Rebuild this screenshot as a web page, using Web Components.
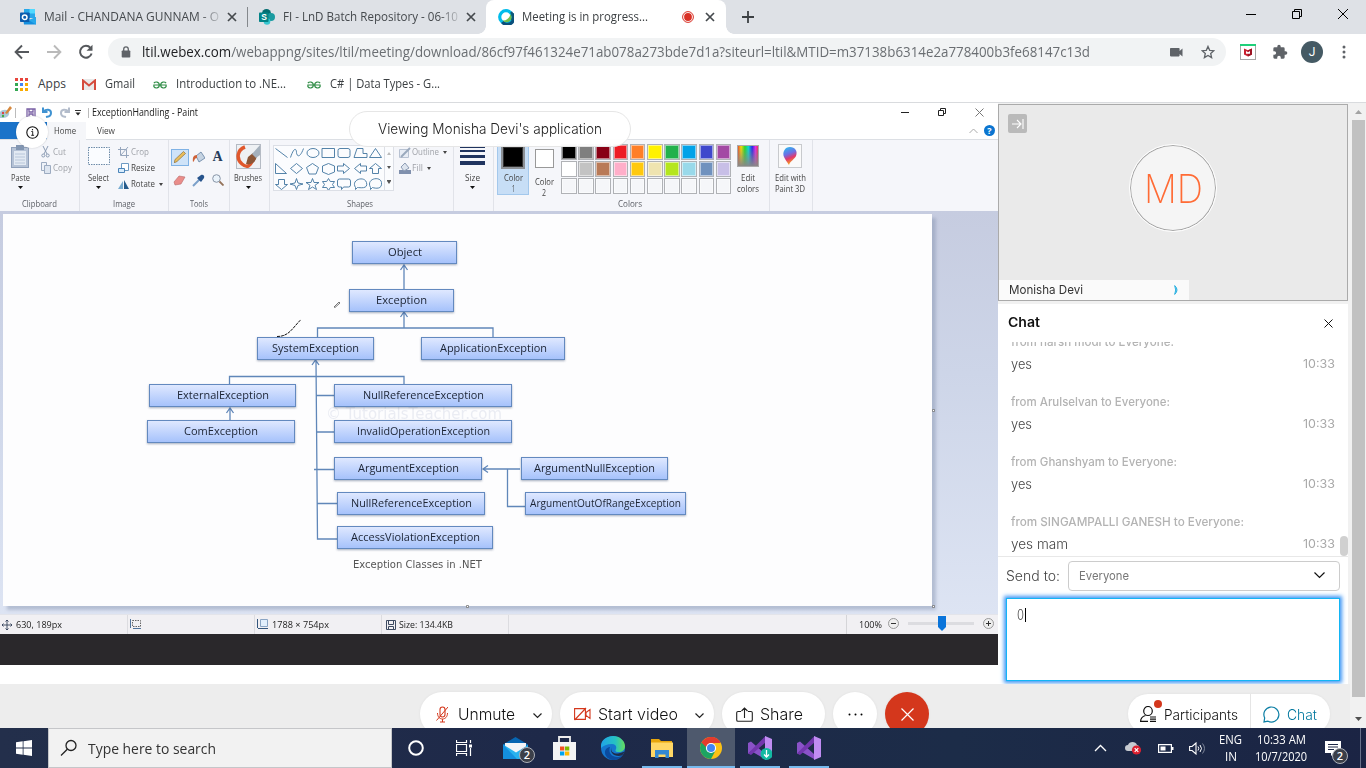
<!DOCTYPE html>
<html lang="en">
<head>
<meta charset="utf-8">
<title>Meeting is in progress...</title>
<style>
html,body{margin:0;height:100%;overflow:hidden;background:#fff}
body{font-family:"Open Sans","Noto Sans",sans-serif;font-size:12px}
</style>
</head>
<body>
<meeting-desktop></meeting-desktop>
<script>
/* Shared helper: registers an element with its own styles and markup. */
function define(name, css, html) {
  const tpl = document.createElement('template');
  tpl.innerHTML = '<style>*{box-sizing:border-box}:host{display:block;box-sizing:border-box}svg{display:block;flex:none}' + css + '</style>' + (typeof html === 'string' ? html : '');
  customElements.define(name, class extends HTMLElement {
    connectedCallback() {
      if (this.shadowRoot) return;
      const root = this.attachShadow({ mode: 'open' });
      if (typeof html === 'function') {
        root.innerHTML = tpl.innerHTML + html(this);
      } else {
        root.appendChild(document.importNode(tpl.content, true));
      }
    }
  });
}

/* One line of text, condensed or widened to the width in its "w" attribute. */
customElements.define('ui-text', class extends HTMLElement {
  connectedCallback() {
    if (this.shadowRoot) return;
    const root = this.attachShadow({ mode: 'open' });
    root.innerHTML = '<style>:host{display:block;white-space:nowrap;flex:none;text-align:left}span{display:inline-block;transform-origin:0 50%}</style><span><slot></slot></span>';
    const w = parseFloat(this.getAttribute('w'));
    if (!w) return;
    const span = root.querySelector('span');
    this.style.width = w + 'px';
    const natural = span.offsetWidth ? span.getBoundingClientRect().width : 0;
    if (natural) span.style.transform = 'scaleX(' + (w / natural) + ')';
  }
});

/* ---------- browser ---------- */
define('browser-tab', `
:host{height:34px;display:flex;align-items:center;padding-left:12px;position:relative;color:#45494d;font-size:12px;line-height:34px}
:host([active]){background:#fff;border-radius:8px 8px 0 0;color:#3c4043}
:host([active])::before,:host([active])::after{content:"";position:absolute;bottom:0;width:8px;height:8px}
:host([active])::before{left:-8px;background:radial-gradient(circle at 0 0,transparent 7.5px,#fff 8px)}
:host([active])::after{right:-8px;background:radial-gradient(circle at 100% 0,transparent 7.5px,#fff 8px)}
.t{margin-left:8px;flex:1;overflow:hidden}
:host([fade]) .t{-webkit-mask-image:linear-gradient(90deg,#000 89%,rgba(0,0,0,.15) 100%);mask-image:linear-gradient(90deg,#000 89%,rgba(0,0,0,.15) 100%)}
.x{margin:0 10px 0 7px}:host([active]) .x{margin:0 11px 0 11px}`,
`<slot name="icon"></slot><div class="t"><slot></slot></div><slot name="status"></slot>
<svg class="x" width="10" height="10" viewBox="0 0 10 10"><path d="M1 1l8 8M9 1l-8 8" stroke="#45494d" stroke-width="1.7"/></svg>`);

define('tab-strip', `
:host{display:flex;height:34px;background:#dee1e6;align-items:stretch}
.sep{width:1px;height:20px;background:#84888c;margin:7px 0 0 0}
.plus{margin:11px 0 0 16px}.win{display:flex;margin-left:auto;padding:9px 18px 0 0;gap:36px}`,
`<browser-tab fade style="width:247px;padding-left:20px">
<svg slot="icon" width="16" height="16" viewBox="0 0 16 16"><path d="M4 0h11v9H4z" fill="#28a8ea"/><path d="M9.500 0H15v4.500H9.500z" fill="#50d9ff"/><path d="M4 4h5.500v5H4z" fill="#0364b8"/><path d="M3 8.500l6.500 3.500L16 8v7.500H4z" fill="#1490df"/><path d="M16 8v7.500L8.500 11z" fill="#28a8ea"/><rect y="3.500" width="9.500" height="9.500" rx=".8" fill="#0b5cad"/><circle cx="4.700" cy="8.200" r="2.300" fill="none" stroke="#fff" stroke-width="1.500"/></svg>
<ui-text w="175">Mail - CHANDANA GUNNAM - O</ui-text></browser-tab>
<div class="sep"></div>
<browser-tab fade style="width:238px;padding-left:11px">
<svg slot="icon" width="16" height="16" viewBox="0 0 16 16"><circle cx="7.500" cy="4.500" r="4.500" fill="#036c70"/><circle cx="12" cy="8" r="4" fill="#1a9ba1"/><circle cx="8" cy="12.500" r="3.300" fill="#37c6d0"/><rect y="3.500" width="9.500" height="9.500" rx=".8" fill="#038387"/><text x="2.300" y="11.300" font-family="Liberation Sans" font-weight="700" font-size="8.500" fill="#fff">S</text></svg>
<ui-text w="175">FI - LnD Batch Repository - 06-10</ui-text></browser-tab>
<browser-tab active style="width:240px">
<svg slot="icon" width="16" height="16" viewBox="0 0 16 16"><circle cx="8" cy="8" r="6.300" fill="#fff" stroke="#00bceb" stroke-width="3.200"/><path d="M14.300 5a6.300 6.300 0 0 1-10 8" fill="none" stroke="#0a4f7c" stroke-width="3.200"/><path d="M13 3a7 7 0 0 1 .8 8" fill="none" stroke="#0d5778" stroke-width="2.400"/><path d="M12.300 5a5 5 0 0 1-7.600 6.600c4 .2 7-2.500 7.600-6.600z" fill="#74bf4b"/></svg>
<ui-text w="126">Meeting is in progress...</ui-text>
<svg slot="status" width="12" height="12" viewBox="0 0 12 12"><circle cx="6" cy="6" r="5.400" fill="#fff" stroke="#d93025" stroke-width="1"/><circle cx="6" cy="6" r="3.900" fill="#d93025"/></svg></browser-tab>
<svg class="plus" width="12" height="12" viewBox="0 0 12 12"><path d="M6 0v12M0 6h12" stroke="#3c4043" stroke-width="1.800"/></svg>
<div class="win">
<svg width="10" height="11"><path d="M0 5.500h10" stroke="#000"/></svg>
<svg width="10" height="11"><path d="M.5 2.500h7v7h-7zM2.500 2.500v-2h7v7h-2" fill="none" stroke="#000"/></svg>
<svg width="10" height="11"><path d="M0 0l10 10M10 0L0 10" stroke="#000"/></svg></div>`);

define('address-bar', `
:host{display:flex;height:35px;background:#fff;align-items:center;padding:1px 0 0 14px}
.nav{display:flex;gap:16px;width:94px}
.box{width:1118px;height:28px;border-radius:14px;background:#f1f3f4;display:flex;align-items:center;padding:0 11px 0 13px;font-size:14px;line-height:28px;color:#6a6e72}
.box ui-text{margin-left:11px}b{font-weight:400;color:#202124}
.cam{margin-left:auto;margin-right:18px}
.ext{display:flex;align-items:center;margin-left:14px}
.av{width:22px;height:22px;border-radius:50%;background:#455a64;color:#fff;font:12px/22px Roboto,sans-serif;text-align:center;margin:0 19px 0 13px}`,
`<div class="nav">
<svg width="16" height="16" viewBox="0 0 16 16"><path d="M8 1.500L1.600 8 8 14.500M2 8h13" fill="none" stroke="#55585c" stroke-width="1.900"/></svg>
<svg width="16" height="16" viewBox="0 0 16 16"><path d="M8 1.500L14.400 8 8 14.500M14 8H1" fill="none" stroke="#bababa" stroke-width="1.900"/></svg>
<svg width="16" height="16" viewBox="0 0 16 16"><path d="M13.600 9.500A5.900 5.900 0 1 1 12.500 4" fill="none" stroke="#55585c" stroke-width="2"/><path d="M14.500.8v6H8.500z" fill="#55585c"/></svg></div>
<div class="box"><svg width="10" height="12" viewBox="0 0 10 12"><rect x=".7" y="4.500" width="8.600" height="7" rx=".8" fill="#5f6368"/><path d="M2.700 5V3.200a2.300 2.300 0 0 1 4.600 0V5" fill="none" stroke="#5f6368" stroke-width="1.300"/></svg>
<ui-text w="948"><b>ltil.webex.com</b>/webappng/sites/ltil/meeting/download/86cf97f461324e71ab078a273bde7d1a?siteurl=ltil&amp;MTID=m37138b6314e2a778400b3fe68147c13d</ui-text>
<svg class="cam" width="13" height="9" viewBox="0 0 13 9"><path d="M.8 0h8a.8.8 0 0 1 .8.8v2.300L12.500.6v7.800L9.600 5.900v1.700a.8.8 0 0 1-.8.8h-8a.8.8 0 0 1-.8-.8V.8A.8.8 0 0 1 .8 0z" fill="#5f6368"/></svg>
<svg width="14" height="14" viewBox="0 0 14 14"><path d="M7 1.400l1.700 3.900 4.100.4-3.100 2.800.9 4.100L7 10.400l-3.600 2.200.9-4.100L1.200 5.700l4.100-.4z" fill="none" stroke="#5f6368" stroke-width="1.300"/></svg></div>
<div class="ext">
<svg width="16" height="16" viewBox="0 0 16 16"><rect x=".5" y=".5" width="15" height="15" fill="#fff" stroke="#a6a6a6"/><rect width="16" height="2" fill="#1fd07a"/><path d="M4 4.500l4 1.700 4-1.700v6L8 12.500l-4-2z" fill="#c8202f"/><path d="M8 6.200l4-1.700v6L8 12.500z" fill="#9c1524"/><path d="M6 7l2 1.200L10 7v2.700H6z" fill="#fff"/></svg>
<svg style="margin-left:16px" width="16" height="16" viewBox="0 0 24 24"><path fill="#5f6368" d="M20.500 11H19V7a2 2 0 0 0-2-2h-4V3.500a2.500 2.500 0 0 0-5 0V5H4a2 2 0 0 0-2 2v3.800h1.500a2.700 2.700 0 0 1 0 5.400H2V20a2 2 0 0 0 2 2h3.800v-1.500a2.700 2.700 0 0 1 5.400 0V22H17a2 2 0 0 0 2-2v-4h1.500a2.500 2.500 0 0 0 0-5z"/></svg>
<div class="av">J</div>
<svg width="4" height="14"><circle cx="2" cy="2" r="1.500" fill="#5f6368"/><circle cx="2" cy="7" r="1.500" fill="#5f6368"/><circle cx="2" cy="12" r="1.500" fill="#5f6368"/></svg></div>`);

const gfg = '<svg width="14" height="8" viewBox="0 0 14 8"><path d="M.9 2.200C2.200.4 6.300.4 6.300 4S2.200 7.600.9 5.700V4.300M.3 4h13.400M13.100 2.200C11.800.4 7.700.4 7.700 4s4.100 3.600 5.400 1.700V4.300" fill="none" stroke="#2f8d46" stroke-width="1.200"/></svg>';
define('bookmarks-bar', `
:host{display:flex;height:34px;background:#fff;border-bottom:1px solid #d9dbde;align-items:center;padding:0 0 2px 15px;font-size:12px;line-height:20px;color:#3c4043}
ui-text{margin:0 17px 2px 9px}`,
`<svg width="13" height="13" viewBox="0 0 13 13"><path d="M0 0h3v3H0zM5 0h3v3H5zM10 0h3v3h-3z" fill="#e8453c"/><path d="M0 5h3v3H0zM0 10h3v3H0z" fill="#34a853"/><path d="M5 5h3v3H5z" fill="#4285f4"/><path d="M10 5h3v3h-3zM5 10h3v3H5zM10 10h3v3h-3z" fill="#f9ab00"/></svg>
<ui-text w="28" style="margin-right:16px;margin-left:10px">Apps</ui-text>
<svg width="14" height="11" viewBox="0 0 14 11"><rect width="14" height="11" rx="1" fill="#e9e9e9"/><path d="M1 11V1.500l6 5 6-5V11" fill="none" stroke="#d54b3d" stroke-width="2"/></svg>
<ui-text w="30" style="margin-right:18px">Gmail</ui-text>${gfg}
<ui-text w="110" style="margin-right:21px">Introduction to .NE...</ui-text>${gfg}
<ui-text w="110">C# | Data Types - G...</ui-text>`);

/* ---------- Paint window ---------- */
define('paint-title', `
:host{display:flex;height:19px;align-items:center;background:#fff;color:#222;font-size:10px;line-height:19px}
.w{margin-left:auto;display:flex;align-items:center;gap:29px;padding-right:14px}i{width:1px;height:10px;background:#bbb}`,
`<svg width="12" height="13" viewBox="0 0 12 13"><path d="M0 6c2-3 8-3 9 0s-2 6-6 6H0z" fill="#a9c9da"/><path d="M5 7l5-7 2 2-5 6z" fill="#d6883d"/><circle cx="3" cy="7" r="1.200" fill="#d44"/><circle cx="3" cy="10" r="1.200" fill="#4a4"/></svg>
<i style="margin-left:3px"></i>
<svg style="margin-left:10px" width="10" height="10"><path d="M1 1h8v8H1zM3 1v3h4V1M3 9V6h4v3" fill="none" stroke="#7960a5" stroke-width="1.300"/></svg>
<svg style="margin-left:6px" width="11" height="11"><path d="M1 .5v4.500h4.500M1.500 4.500C4 2 9 2 9 6S6 9.500 4 10" fill="none" stroke="#3f92d1" stroke-width="2"/></svg>
<svg style="margin-left:6px" width="11" height="11"><path d="M10 .5v4.500H5.500M9.500 4.500C7 2 2 2 2 6s3 3.500 5 4" fill="none" stroke="#b3bccb" stroke-width="2"/></svg>
<svg style="margin-left:5px" width="6" height="6"><path d="M0 .5h6" stroke="#333"/><path d="M.5 2.500h5l-2.500 3z" fill="#222"/></svg>
<i style="margin:0 3px 0 7px"></i><ui-text w="106">ExceptionHandling - Paint</ui-text>
<div class="w"><svg width="8" height="9"><path d="M0 4.500h8" stroke="#222"/></svg>
<svg width="8" height="9"><path d="M.5 2.500h5v5h-5zM2.500 2V.5h5v5H6" fill="none" stroke="#222"/></svg>
<svg width="9" height="9"><path d="M.5.500l8 8m0-8l-8 8" stroke="#777"/></svg></div>`);

define('paint-tabs', `
:host{display:flex;height:18px;background:#fff;border-bottom:1px solid #dcdfe4;font-size:9px;line-height:17px;color:#444}
.f{width:47px;background:#1b73c9}.h{width:39px;background:#f5f6f9;height:18px;padding-left:7px}.v{padding-left:11px}
.r{margin-left:auto;display:flex;align-items:center;padding-right:3px;gap:6px}
.q{width:11px;height:11px;border-radius:50%;background:#0b75d0;color:#fff;font:bold 9px/11px "Open Sans",sans-serif;text-align:center}`,
`<div class="f"></div><div class="h"><ui-text w="22">Home</ui-text></div><div class="v"><ui-text w="18">View</ui-text></div>
<div class="r"><svg width="9" height="6"><path d="M.5 5L4.500 1l4 4" fill="none" stroke="#aaa"/></svg><div class="q">?</div></div>`);

/* Ribbon group: a body and a caption below it. */
define('ribbon-group', `
:host{display:flex;flex-direction:column;height:71px;border-right:1px solid #e1e3e9;font-size:9px;line-height:11px;color:#444}
.b{height:58px;display:flex}.c{display:flex;justify-content:center;font-size:8.500px;line-height:11px;color:#5c5f66}`,
`<div class="b"><slot></slot></div><div class="c"><slot name="caption"></slot></div>`);

/* Large ribbon button: picture, label and optional menu arrow. */
define('ribbon-big', `
:host{display:flex;flex-direction:column;align-items:center;flex:none;line-height:11px}
.i{height:32px;display:flex;align-items:center;justify-content:center}
.a{margin-top:3px}:host(:not([menu])) .a{display:none}`,
`<div class="i"><slot name="icon"></slot></div><slot></slot><svg class="a" width="5" height="3"><path d="M0 0h5L2.500 3z" fill="#111"/></svg>`);

define('ribbon-row', `
:host{display:flex;align-items:center;height:16px;line-height:16px}
:host([dim]){color:#a0a3a9}
.i{width:11px;margin-right:2px;display:flex;justify-content:center}.a{margin-left:4px}
:host(:not([menu])) .a{display:none}`,
`<div class="i"><slot name="icon"></slot></div><slot></slot><svg class="a" width="4" height="3"><path d="M0 0h4L2 3z" fill="#444"/></svg>`);

define('shape-gallery', `
:host{display:flex;width:121px;height:46px;border:1px solid #dcdfe6;background:#fbfcfe;margin:5px 0 0 3px}
.s{width:11px;border-left:1px solid #dcdfe6;display:flex;flex-direction:column;justify-content:space-around;align-items:center}`,
`<svg width="110" height="44" viewBox="273.500 145.500 110 44" fill="none" stroke="#41759f" stroke-width=".9">
<path d="M275 148l12 9M290 157c4-12 6-8 6-5s3 7 7-4M321.500 148h12.500v9h-12.500zM353.500 157l3-9h6v5h4v4zM369 157h12l-6-9zM275 173v-10l11 10zM296 163l6 5-6 5-6-5zM312 163l6 4-2.500 6.500h-7L306 167zM328 163l6 2.500v6l-6 2.500-6-2.500v-6zM337 165.500h6V163l6 5-6 5v-2.500h-6zM366 165.500h-6V163l-6 5 6 5v-2.500h6zM375 163l6 5h-3v5h-6v-5h-3zM281 189l-6-5h3v-5h6v5h3zM296 178l1.500 4.500 5 1-5 1.500-1.500 4-1.500-4-5-1.500 5-1zM312 178l1.500 4h5l-4 2.800 1.500 4.200-4-2.500-4 2.500 1.500-4.200-4-2.800h5zM328 178l1.800 3h4.200l-2 3 2 3h-4.200l-1.800 3-1.800-3H322l2-3-2-3h4.200z"/>
<ellipse cx="312.500" cy="152.500" rx="6" ry="4.500"/><rect x="337.500" y="148" width="12" height="9" rx="2"/><path d="M339 178.500h9a2 2 0 0 1 2 2v4a2 2 0 0 1-2 2h-5l-2 2.500v-2.500h-2a2 2 0 0 1-2-2v-4a2 2 0 0 1 2-2zM355 187c-5-8 9-12 11-5s-7 5-9 5l-2 2zM370 187c-5-9 10-12 11-5s-6 6-9 5l-2 2z"/></svg>
<div class="s"><svg width="4" height="3"><path d="M0 3h4L2 0z" fill="#bbb"/></svg><svg width="4" height="3"><path d="M0 0h4L2 3z" fill="#555"/></svg><svg width="4" height="4"><path d="M0 .5h4" stroke="#555"/><path d="M0 1h4L2 4z" fill="#555"/></svg></div>`);

define('color-palette', `
:host{display:grid;grid-template:repeat(3,15.5px)/repeat(10,15.700px);gap:1.500px;margin:4px 0 0 2px;height:50px}
div{border:1px solid #b0b2b6;box-shadow:inset 0 0 0 1px rgba(255,255,255,.5)}`,
() => ['#000','#7f7f7f','#880015','#ed1c24','#ff7f27','#fff200','#22b14c','#00a2e8','#3f48cc','#a349a4','#fff','#c3c3c3','#b97a57','#ffaec9','#ffc90e','#efe4b0','#b5e61d','#99d9ea','#7092be','#c8bfe7'].concat(Array(10).fill('#f5f6f9')).map(c => '<div style="background:' + c + '"></div>').join(''));

define('paint-ribbon', `
:host{display:flex;height:71px;background:#f5f6fa}
.col{display:flex;flex-direction:column;padding-top:4px}
.tools{display:grid;grid-template:24px 22px/19px 19px 19px;place-items:center;margin:5px 0 0 1px;height:46px}
.on{background:#cfe3f8;border:1px solid #7fb2e5;width:18px;height:17px;display:grid;place-items:center}
.A{font:bold 14px/16px "Liberation Serif",serif;color:#263c5b}
.c1{background:#c7def6;border:1px solid #a3c8ec;width:32px;height:51px;margin:4px 0 0 3px;padding-top:0}
.c2{width:30px;margin:4px 0 0;padding-top:0}
.sw{width:24px;height:24px;border:2px solid #8d9196;box-shadow:inset 0 0 0 1px #333}`,
`<ribbon-group style="width:80px"><ribbon-big menu style="margin-left:10px;width:21px"><svg slot="icon" width="19" height="23"><rect x=".5" y="2.500" width="17" height="20" fill="#b5c2d6" stroke="#8fa0ba"/><rect x="5" y="0" width="8" height="5" fill="#8296b2"/><path d="M3 6h12v14H3z" fill="#e3eaf3"/><path d="M4 9h10M4 12h10M4 15h10M4 18h10" stroke="#b8c6da"/></svg><ui-text w="19">Paste</ui-text></ribbon-big>
<div class="col" style="margin-left:9px"><ribbon-row dim><svg slot="icon" width="9" height="12"><path d="M2 0l4 8M7 0L3 8" stroke="#8b9bb3" fill="none"/><circle cx="2.300" cy="9.500" r="1.500" fill="none" stroke="#8b9bb3"/><circle cx="6.700" cy="9.500" r="1.500" fill="none" stroke="#8b9bb3"/></svg><ui-text w="13">Cut</ui-text></ribbon-row>
<ribbon-row dim><svg slot="icon" width="10" height="12"><path d="M.5.500h5v8h-5z" fill="#eef2f8" stroke="#9cabc1"/><path d="M3.500 3.500h6v8h-6z" fill="#dde5f0" stroke="#9cabc1"/></svg><ui-text w="19">Copy</ui-text></ribbon-row></div><ui-text slot="caption" w="35">Clipboard</ui-text></ribbon-group>
<ribbon-group style="width:89px"><ribbon-big menu style="margin-left:7px;width:23px"><svg slot="icon" width="22" height="19"><rect x=".5" y=".5" width="21" height="17" fill="#fafcff" stroke="#6d8ba8" stroke-dasharray="1.500 1"/></svg><ui-text w="21">Select</ui-text></ribbon-big>
<div class="col" style="margin-left:8px"><ribbon-row dim><svg slot="icon" width="11" height="11"><path d="M2.500 0v8.500H11M0 2.500h8.500V11M3 8l7-8" fill="none" stroke="#96a6bd"/></svg><ui-text w="18">Crop</ui-text></ribbon-row>
<ribbon-row><svg slot="icon" width="11" height="11"><path d="M3.500.500h7v7h-7z" fill="#fff" stroke="#6d9ac3"/><path d="M.5 5.500h6v4h-6z" fill="#d8ecfc" stroke="#4b84b9"/></svg><ui-text w="24">Resize</ui-text></ribbon-row>
<ribbon-row menu><svg slot="icon" width="11" height="11"><path d="M0 10h5V2z" fill="#78acd1"/><path d="M6 10h5L6 1z" fill="#245a8b"/></svg><ui-text w="24">Rotate</ui-text></ribbon-row></div><ui-text slot="caption" w="22">Image</ui-text></ribbon-group>
<ribbon-group style="width:61px"><div class="tools"><div class="on"><svg width="12" height="12"><path d="M0 12l1-3.500L9.500.5l2 2-8.500 8z" fill="#e9bd5b" stroke="#80622e" stroke-width=".6"/></svg></div>
<svg width="13" height="13"><path d="M4 5l5-4 4 6-6 4z" fill="#c5d3e2" stroke="#6480a1" stroke-width=".8"/><path d="M5 4C1 4 .5 7 1 11c2-1 1-4 4-4z" fill="#cf6238"/></svg><div class="A">A</div>
<svg width="13" height="11"><path d="M1 7l5-6 6 1-4 7-6 1z" fill="#ea8d8a" stroke="#b96a6a" stroke-width=".6"/></svg>
<svg width="13" height="13"><path d="M1 12l7-7" stroke="#7ba0c9" stroke-width="2"/><path d="M5 4l4 4 3-4c1-2-1-4-3-3z" fill="#27548c"/></svg>
<svg width="12" height="12"><circle cx="4.500" cy="4.500" r="3.800" fill="#eaf3fb" stroke="#8895a7"/><path d="M7.500 7.500l4 4" stroke="#94735a" stroke-width="1.800"/></svg></div><ui-text slot="caption" w="18">Tools</ui-text></ribbon-group>
<ribbon-group style="width:40px"><ribbon-big menu style="width:36px"><svg slot="icon" width="25" height="25"><rect x=".5" y=".5" width="24" height="24" fill="#eef1f4" stroke="#b5bbc4"/><path d="M9 3C1 6 0 15 6 20s8 1 11-4" fill="none" stroke="#e0572c" stroke-width="3.500"/><path d="M12 13l5-4 4 2c-1 8-6 10-11 9z" fill="#8c5637"/><path d="M16 10l8-9v10l-4 3z" fill="#a5b1bd"/></svg><ui-text w="28">Brushes</ui-text></ribbon-big></ribbon-group>
<ribbon-group style="width:184px"><shape-gallery></shape-gallery><div class="col" style="margin-left:5px"><ribbon-row dim menu><svg slot="icon" width="12" height="11"><path d="M.5 2.500h9v8h-9z" fill="#e8edf5" stroke="#b8c2d2"/><path d="M2 10l9-9" stroke="#9aa9bd" stroke-width="2"/></svg><ui-text w="27">Outline</ui-text></ribbon-row><ribbon-row dim menu><svg slot="icon" width="12" height="12"><path d="M0 8h12v4H0z" fill="#8090ad"/><path d="M2 5l4-4 4 5-5 3z" fill="#dde4ee" stroke="#8d9cb4"/></svg><ui-text w="11">Fill</ui-text></ribbon-row></div><ui-text slot="caption" w="26" style="margin-right:4px">Shapes</ui-text></ribbon-group>
<ribbon-group style="width:40px"><ribbon-big menu style="width:37px"><svg slot="icon" width="25" height="20"><path d="M0 1h25v1H0zM0 4h25v2H0zM0 9h25v3H0zM0 15h25v4H0z" fill="#20345f"/></svg><ui-text w="15">Size</ui-text></ribbon-big></ribbon-group>
<ribbon-group style="width:276px"><ribbon-big class="c1"><div slot="icon" class="sw" style="background:#000;margin-bottom:4px"></div><ui-text w="19" style="margin-top:-1px">Color</ui-text><ui-text w="3">1</ui-text></ribbon-big>
<ribbon-big class="c2"><div slot="icon" class="sw" style="background:#fff;width:19px;height:19px;border:1px solid #999;box-shadow:none;margin-bottom:4px"></div><ui-text w="19">Color</ui-text><ui-text w="4">2</ui-text></ribbon-big>
<color-palette></color-palette>
<ribbon-big style="margin-left:4px;width:26px"><svg slot="icon" width="22" height="22"><defs><linearGradient id="r"><stop stop-color="#e33"/><stop offset=".17" stop-color="#fd0"/><stop offset=".35" stop-color="#2d2"/><stop offset=".52" stop-color="#0dd"/><stop offset=".7" stop-color="#22e"/><stop offset=".86" stop-color="#e2e"/><stop offset="1" stop-color="#e33"/></linearGradient><linearGradient id="g" x2="0" y2="1"><stop stop-color="#888" stop-opacity="0"/><stop offset="1" stop-color="#888"/></linearGradient></defs><rect x=".5" y=".5" width="21" height="21" fill="url(#r)"/><rect x=".5" y=".5" width="21" height="21" fill="url(#g)" stroke="#aaa"/></svg><ui-text w="14">Edit</ui-text><ui-text w="22">colors</ui-text></ribbon-big><ui-text slot="caption" w="24" style="margin-right:3px">Colors</ui-text></ribbon-group>
<ribbon-group style="width:43px"><ribbon-big style="width:40px"><svg slot="icon" width="24" height="24"><defs><linearGradient id="p" x2=".3" y2="1"><stop stop-color="#25c5ef"/><stop offset=".45" stop-color="#6c6fe6"/><stop offset=".7" stop-color="#e2386d"/><stop offset="1" stop-color="#f5a21c"/></linearGradient></defs><rect x=".5" y=".5" width="23" height="23" fill="#fafafa" stroke="#c8cacd"/><path d="M12 3c5 0 8 4 6 9-1 3-6 5-7 9-2-3-4-6-5-8C4 8 7 3 12 3z" fill="url(#p)"/></svg><ui-text w="31">Edit with</ui-text><ui-text w="30">Paint 3D</ui-text></ribbon-big></ribbon-group>`);

/* A class box of the diagram, placed on the free drawing canvas. */
define('class-node', `
:host{position:absolute;display:flex;align-items:center;justify-content:center;padding-bottom:1px;border:1px solid #6389bf;background:linear-gradient(#dfe8ff,#a6c2fb);box-shadow:0 1px 2px rgba(60,80,110,.45);font:11.500px/14px "Open Sans",sans-serif;color:#1c2434}`,
`<slot></slot>`);

const nodes = [
['Object',352,241,105,23,34],['Exception',349,289,105,23,51],['SystemException',257,337,117,23,87],['ApplicationException',421,337,144,23,107],
['ExternalException',149,384,147,23,92],['NullReferenceException',334,384,178,23,121],['ComException',147,420,148,23,74],['InvalidOperationException',334,420,178,23,133],
['ArgumentException',334,457,148,23,101],['ArgumentNullException',521,457,147,23,121],['NullReferenceException',337,492,148,23,121],['ArgumentOutOfRangeException',525,492,161,23,151],['AccessViolationException',337,526,156,23,129]];
define('paint-canvas', `
:host{position:relative;height:403px;padding:3px 0 0 3px;background:linear-gradient(#c6cce0,#cdd5e8 40%,#dde4f3);overflow:hidden}
.page{width:929px;height:392px;background:#fdfdfe;box-shadow:4px 4px 3px rgba(120,135,165,.4)}
.lines,.wm,.cap{position:absolute}
.lines{left:0;top:0}.wm{left:326px;top:193px;font:15px/20px "DejaVu Sans",sans-serif;color:#eaecf3}
.cap{left:353px;top:345px;font:10.500px/16px "DejaVu Sans",sans-serif;color:#555}`,
() => `<div class="page"></div><ui-text class="wm" w="176">© TutorialsTeacher.com</ui-text>
<svg class="lines" width="998" height="403" viewBox="0 211 998 403" fill="none" stroke="#6087b9" stroke-width="1.300">
<path d="M404 289v-23M400.500 270l3.500-5 3.500 5M404 328v-16M400.500 317l3.500-5 3.500 5M317.500 337v-9h175.500v9M316 361l1.500 178h19.500M312 365l3.500-5 3.500 5M229.500 384v-7.500h174.500v7.500M230 420v-12M226.500 413l3.500-5 3.500 5M316 395.500h18M316 432h18M314 469.500h20M317 503.500h20M520 469h-37M488 465.500l-5 3.500 5 3.500M507.500 469v37.500h18"/>
<path d="M277 336.500c12 0 15-8 24-17" stroke="#111" stroke-width="1" stroke-dasharray="3 .8"/><path d="M334 307l5-5 1 1-5 4.500z" stroke="#555" stroke-width=".8"/>
<path d="M932.500 409.500h2v2h-2zM932.500 605.500h2v2h-2zM466.500 605.500h2v2h-2z" fill="#fff" stroke="#666" stroke-width=".7"/></svg>` +
nodes.map(n => `<class-node style="left:${n[1]}px;top:${n[2] - 211}px;width:${n[3]}px;height:${n[4]}px"><ui-text w="${n[5]}">${n[0]}</ui-text></class-node>`).join('') +
'<ui-text class="cap" w="129">Exception Classes in .NET</ui-text>');

define('paint-status', `
:host{display:flex;height:20px;background:#f1f0f3;border-top:1px solid #e3e4ea;font-size:9.500px;line-height:20px;color:#222;overflow:hidden}
.c{display:flex;align-items:center;height:19px;border-right:1px solid #dcdce0}
.z{margin-left:auto;display:flex;align-items:center;height:19px;border-left:1px solid #d5d5d8;padding-left:12px;width:152px}
.o{width:11px;height:11px;margin-bottom:2px}.bar{width:66px;height:3px;background:#dcdce0;margin:0 9px 2px;display:flex;align-items:center;justify-content:center;padding-left:1px}`,
`<div class="c" style="width:128px;padding-left:2px"><svg width="10" height="10"><path d="M5 0v10M0 5h10M3.500 1.500L5 0l1.500 1.500M3.500 8.500L5 10l1.500-1.500M1.500 3.500L0 5l1.500 1.500M8.500 3.500L10 5 8.500 6.500" fill="none" stroke="#33415a" stroke-width=".9"/></svg><ui-text w="46" style="margin-left:4px">630, 189px</ui-text></div>
<div class="c" style="width:127px;padding-left:2px"><svg width="11" height="11"><path d="M2.500 1.500h8v6h-8z" fill="none" stroke="#666" stroke-dasharray="1.500 1"/><path d="M.5 0v9M3 9.500h8" stroke="#52749b"/></svg></div>
<div class="c" style="width:127px;padding-left:2px"><svg width="11" height="11"><path d="M3.500.500h7v7h-7z" fill="#e2effc" stroke="#8aa5c4"/><path d="M.5 0v9M1 9.500h10" stroke="#34567d"/></svg><ui-text w="57" style="margin-left:4px">1788 × 754px</ui-text></div>
<div class="c" style="width:127px;padding-left:4px"><svg width="10" height="10"><path d="M.5.500h9v9h-9zM2.500.500v4h5v-4M2.500 9V6.500h5V9" fill="none" stroke="#3d4a61"/></svg><ui-text w="54" style="margin-left:3px">Size: 134.4KB</ui-text></div>
<div class="z"><ui-text w="23">100%</ui-text><svg class="o" style="margin-left:6px" viewBox="0 0 11 11"><circle cx="5.500" cy="5.500" r="5" fill="#eee" stroke="#999"/><path d="M3 5.500h5" stroke="#333"/></svg>
<div class="bar"><svg width="8" height="15"><path d="M0 0h8v11l-4 4-4-4z" fill="#0a74da"/></svg></div><svg class="o" viewBox="0 0 11 11"><circle cx="5.500" cy="5.500" r="5" fill="#eee" stroke="#999"/><path d="M3 5.500h5M5.500 3v5" stroke="#333"/></svg></div>`);

define('shared-screen', `
:host{position:relative;width:998px;height:581px;background:#fff}
.dark{height:31px;background:#2a282b}
.info,.pill{position:absolute;background:rgba(255,255,255,.95);display:flex;align-items:center;justify-content:center}
.info{left:16px;top:13px;width:32px;height:32px;border-radius:50%;background:#fff;box-shadow:0 0 2px rgba(0,0,0,.2)}
.pill{left:349px;top:8px;width:282px;height:36px;border-radius:18px;border:1px solid #e6e6e6;font:300 14.500px/34px Inter,sans-serif;color:#222}`,
`<paint-title></paint-title><paint-tabs></paint-tabs><paint-ribbon></paint-ribbon><paint-canvas></paint-canvas><paint-status></paint-status><div class="dark"></div>
<div class="info"><svg width="13" height="13"><circle cx="6.500" cy="6.500" r="5.700" fill="none" stroke="#111" stroke-width="1.100"/><path d="M5.300 5.500h1.400V9.300M5.200 9.300h2.900" fill="none" stroke="#111" stroke-width=".9"/><circle cx="6.500" cy="3.700" r=".65"/></svg></div>
<div class="pill"><ui-text w="224">Viewing Monisha Devi's application</ui-text></div>`);

/* ---------- meeting side panel ---------- */
define('speaker-video', `
:host{position:relative;height:197px;border:1px solid #aaa;background:#eaeaea;display:flex;justify-content:center;font-family:Inter,sans-serif}
.av{width:88px;height:88px;margin-top:39px;border-radius:50%;background:#f5f5f5;border:1px solid #fff;box-shadow:inset 0 0 0 1px #a5a5a5;color:#ff6b35;font-weight:200;font-size:39px;line-height:88px;display:flex;justify-content:center}
.go{position:absolute;left:9px;top:9px;width:19px;height:19px;border-radius:2px;background:#bababa;display:grid;place-items:center}
.n{position:absolute;left:0;bottom:0;width:190px;height:20px;background:#fafafa;display:flex;align-items:center;justify-content:space-between;padding:0 11px 0 10px;font-size:12px;line-height:20px;color:#333}`,
`<div class="go"><svg width="12" height="10"><path d="M0 5h8M5 1l4 4-4 4M11 0v10" fill="none" stroke="#fff" stroke-width="1.100"/></svg></div>
<div class="av"><ui-text w="59">MD</ui-text></div>
<div class="n"><ui-text w="74">Monisha Devi</ui-text><svg width="4" height="10"><path d="M.7.600q4.600 4.400 0 8.800 2-4.400 0-8.800z" fill="#9bdcf5" stroke="#14a7dd" stroke-width=".9"/></svg></div>`);

define('chat-message', `
:host{height:60px;padding:0 13px;line-height:20px;color:#444;font-size:14px;font-weight:300}
.h{font-size:12px;font-weight:500;color:#b3b3b3;line-height:20px;height:20px}
.r{display:flex;justify-content:space-between;height:24px;line-height:24px}.t{font-size:12px;font-weight:400;color:#a9a9a9}`,
e => `<div class="h"><ui-text w="${e.getAttribute('fw')}">${e.getAttribute('from')}</ui-text></div><div class="r"><ui-text w="${e.getAttribute('tw')}">${e.textContent}</ui-text><ui-text class="t" w="32">10:33</ui-text></div>`);

define('chat-panel', `
:host{height:380px;background:#fff;font-family:Inter,sans-serif;margin-top:3px}
.hd{height:38px;display:flex;align-items:center;justify-content:space-between;padding:0 15px 2px 10px;font-weight:600;font-size:13.500px;color:#111}
.hd svg{margin-top:2px}
.list{position:relative;height:215px;overflow:hidden;border-bottom:1px solid #e8e8e8;display:flex;flex-direction:column;justify-content:flex-end}
.in{margin-bottom:-16px}.th{position:absolute;right:0;bottom:0;width:8px;height:20px;border-radius:4px;background:#d0d0d0}
.to{display:flex;align-items:center;height:37px;padding:0 8px;gap:8px;font-size:14px;font-weight:300;color:#444;line-height:30px}
.sel{width:272px;height:30px;border:1px solid #ccc;border-radius:4px;display:flex;align-items:center;justify-content:space-between;padding:0 14px 0 10px;font-size:12px;font-weight:400;color:#777;line-height:28px}
.ta{margin:4px 8px 0;height:83px;width:334px;border:1px solid #12b5f5;box-shadow:0 0 4px 2px #3d96f5;padding:7px 10px;display:flex;font-size:14px;font-weight:300;color:#444;line-height:18px}
.ca{width:1px;height:14px;background:#000;margin:2px 0 0 1px}`,
`<div class="hd"><ui-text w="32">Chat</ui-text><svg width="9" height="9"><path d="M.5.500l8 8m0-8l-8 8" stroke="#111"/></svg></div>
<div class="list"><div class="in">
<chat-message from="from harsh modi to Everyone:" fw="163" tw="21">yes</chat-message>
<chat-message from="from Arulselvan to Everyone:" fw="159" tw="21">yes</chat-message>
<chat-message from="from Ghanshyam to Everyone:" fw="166" tw="21">yes</chat-message>
<chat-message from="from SINGAMPALLI GANESH to Everyone:" fw="233" tw="57">yes mam</chat-message></div><div class="th"></div></div>
<div class="to"><ui-text w="54">Send to:</ui-text><div class="sel"><ui-text w="50">Everyone</ui-text><svg width="11" height="7"><path d="M.5.500l5 5 5-5" fill="none" stroke="#111" stroke-width="1.200"/></svg></div></div>
<div class="ta"><ui-text w="7">0</ui-text><div class="ca"></div></div>`);

define('page-scrollbar', `
:host{width:16px;background:#f1f1f1;display:flex;flex-direction:column;align-items:center;padding-top:7px}
.t{width:13px;height:577px;background:#c1c1c1;margin:6px 0 20px;flex:none}`,
`<svg width="7" height="4"><path d="M0 4h7L3.500 0z" fill="#a3a3a3"/></svg><div class="t"></div><svg width="7" height="4"><path d="M0 0h7L3.500 4z" fill="#505050"/></svg>`);

/* ---------- meeting controls ---------- */
define('control-bar', `
:host{height:44px;background:#ededed;display:flex;padding:8px 20px 0 420px;overflow:hidden;font:300 16px/43px Inter,sans-serif;color:#111}
.p{height:44px;border-radius:22px;background:#fff;display:flex;align-items:center;flex:none;margin-right:8px;box-shadow:0 0 3px rgba(0,0,0,.06)}
.v{margin-top:3px}
.r{margin:2px 0 0 auto;height:40px;line-height:39px;font-size:14px;width:202px;margin-right:0;position:relative}
.dot{position:absolute;left:26px;top:6px;width:8px;height:8px;border-radius:50%;background:#d4371c}
.chat{height:40px;border-left:1px solid #e5e5e5;display:flex;align-items:center;padding-left:12px;margin-left:12px;color:#00779e;gap:7px}`,
`<div class="p" style="width:132px;padding-left:16px"><svg width="12" height="17"><rect x="4" y="1" width="5" height="10" rx="2.500" fill="none" stroke="#d4371c" stroke-width="1.100"/><path d="M1.500 7c0 8 10 8 10 0M6.500 13v3M4 16h5M.5 14.500L12 1" fill="none" stroke="#d4371c"/></svg><ui-text w="57" style="margin-left:10px">Unmute</ui-text><svg class="v" style="margin-left:18px" width="9" height="6"><path d="M.5.500l4 4 4-4" fill="none" stroke="#222" stroke-width="1.200"/></svg></div>
<div class="p" style="width:154px;padding-left:14px"><svg width="17" height="14"><path d="M.6 1.600h10.800v10.800H.6zM.6 13L12 1M12 5.500l4-3v9l-4-3z" fill="none" stroke="#d4371c" stroke-width="1.100"/></svg><ui-text w="80" style="margin-left:7px">Start video</ui-text><svg class="v" style="margin-left:17px" width="9" height="6"><path d="M.5.500l4 4 4-4" fill="none" stroke="#222" stroke-width="1.200"/></svg></div>
<div class="p" style="width:103px;padding-left:14px"><svg width="17" height="15"><path d="M5 4.500H2a1.300 1.300 0 0 0-1.300 1.300v7.200A1.300 1.300 0 0 0 2 14.300h13a1.300 1.300 0 0 0 1.300-1.300V5.800A1.300 1.300 0 0 0 15 4.500h-3M8.500 11V1M5.500 4l3-3 3 3" fill="none" stroke="#222" stroke-width="1.100"/></svg><ui-text w="43" style="margin-left:7px">Share</ui-text></div>
<div class="p" style="width:44px;justify-content:center"><svg width="15" height="3"><circle cx="1.500" cy="1.500" r="1"/><circle cx="7.500" cy="1.500" r="1"/><circle cx="13.500" cy="1.500" r="1"/></svg></div>
<div class="p" style="width:44px;justify-content:center;background:#d4371c"><svg width="13" height="13"><path d="M.5.500l12 12m0-12l-12 12" stroke="#fff" stroke-width="1.200"/></svg></div>
<div class="p r"><svg style="margin-left:12px" width="17" height="17"><ellipse cx="8" cy="5" rx="4.300" ry="4.500" fill="none" stroke="#111" stroke-width="1.200"/><path d="M5.500 9.500C2 10.500.6 13 .6 15.400H8M10 11h6M10 13.200h6M10 15.400h6" fill="none" stroke="#111" stroke-width="1.200"/></svg><ui-text w="74" style="margin-left:7px">Participants</ui-text>
<div class="chat"><svg width="17" height="17"><path d="M1 15.900l.7-4A7.500 7.500 0 1 1 5 15.200z" fill="none" stroke="#0d7fa5" stroke-width="1.200"/></svg><ui-text w="30">Chat</ui-text></div><div class="dot"></div></div>`);

/* ---------- taskbar ---------- */
define('task-item', `
:host{height:40px;display:flex;align-items:center;justify-content:center;position:relative;flex:none}
:host([open])::after{content:"";position:absolute;bottom:0;left:4px;right:4px;height:2px;background:#76b9ed}
:host([active])::after{left:0;right:0}:host([active]){background:#4e596d}`, `<slot></slot>`);
const vs = '<path d="M0 7l3-1.500L17 18v5L3 15l-3 3z" fill="#8a52c8"/><path d="M0 17.500L16 1.500 18 0v6L3 19z" fill="#7236ad"/><path d="M17 0l7 3v18l-7 3z" fill="#c08cf2"/>';
define('win-taskbar', `
:host{display:flex;height:40px;background:linear-gradient(90deg,#232f4b,#1e2949 40%,#1c2c48 70%,#1b2444);color:#fff;font-size:12px}
.start{width:48px;display:grid;place-items:center}
.q{width:344px;background:#f2f2f2;border:1px solid #c5c6c9;display:flex;align-items:center;padding-left:11px;color:#333;font-size:15px;line-height:38px}
.n{position:absolute;width:16px;height:16px;border-radius:50%;background:#3b3f49;border:1px solid #adb1b9;font-size:11px;line-height:14px;text-align:center;font-weight:600}
.tray{margin-left:auto;display:flex;align-items:center;width:272px;height:40px}
.two{display:flex;flex-direction:column;align-items:center;line-height:17.500px}
.msg{position:relative;margin-left:18px}.end{margin-left:19px;width:1px;height:40px;background:#68718a}`,
`<div class="start"><svg width="16" height="16"><path d="M0 2.200L6.700 1.300v6.300H0zM7.500 1.200L16 0v7.600H7.500zM0 8.400h6.700v6.300L0 13.800zM7.500 8.400H16V16l-8.500-1.200z" fill="#fff"/></svg></div>
<div class="q"><svg width="18" height="18"><circle cx="11" cy="6.500" r="5" fill="none" stroke="#222" stroke-width="1.300"/><path d="M7.300 10.300L1 16.500" stroke="#222" stroke-width="1.300"/></svg><ui-text w="128" style="margin-left:10px">Type here to search</ui-text></div>
<task-item style="width:48px"><svg width="16" height="16"><circle cx="8" cy="8" r="6.800" fill="none" stroke="#fff" stroke-width="2"/></svg></task-item>
<task-item style="width:48px"><svg width="17" height="16"><path d="M.5 4.500h10v7H.5zM.5 0v2.500h10V0M.5 16v-2.500h10V16M14.500 0v3M14.500 8v8" fill="none" stroke="#fff" stroke-width="1.200"/><rect x="13" y="4.500" width="3" height="3" fill="#fff"/></svg></task-item>
<task-item style="width:54px"><svg width="25" height="22"><path d="M0 7.500L12.500 0 25 7.500V22H0z" fill="#0766b2"/><path d="M2 6h21v8L12.500 19 2 13z" fill="#f2f5f8"/><path d="M0 7.500l13 8L25 8v14H0z" fill="#28b2ef"/><path d="M0 22V7.500L14 22z" fill="#1490df"/></svg><div class="n" style="left:31px;top:19px">2</div></task-item>
<task-item style="width:46px;padding-right:1px"><svg width="23" height="24"><path d="M6 6V1h11v5" fill="none" stroke="#eee" stroke-width="1.800"/><path d="M0 6h23v18H0z" fill="#f4f4f4"/><path d="M7 10.500h4.300v4H7z" fill="#f25022"/><path d="M12 10.500h4.300v4H12z" fill="#7fba00"/><path d="M7 15.500h4.300v4H7z" fill="#00a4ef"/><path d="M12 15.500h4.300v4H12z" fill="#ffb900"/></svg></task-item>
<task-item style="width:50px"><svg width="24" height="24" viewBox="0 0 24 24"><defs><linearGradient id="e"><stop stop-color="#20a4e8"/><stop offset=".6" stop-color="#26c2c2"/><stop offset="1" stop-color="#66dd5c"/></linearGradient></defs><circle cx="12" cy="12" r="12" fill="#1577ce"/><path d="M0 12C-1 5 5 0 12 0s12 5 12 10c0 4-3 6-6 6-4 0-4-1-3-3 1-3-1-5-4-5C6 8 2 10 0 12z" fill="url(#e)"/><path d="M9 11c-2 5 1 10 7 10 2 0 4-.5 6-2-4 6-13 7-17 1-3-5 1-9 4-9z" fill="#0b4b9e"/><path d="M10.500 11.500c-1.500 4 2.500 6.500 6.500 6 3-.4 5-1.500 6.400-2-.5 2-1.500 3-2.500 4-7 2-13-3-10.400-8z" fill="#1f2b49"/></svg></task-item>
<task-item open style="width:48px"><svg width="22" height="19"><path d="M0 0h8l2 2h11v16H0z" fill="#e8a60c"/><path d="M0 3.500h22V18H0z" fill="#ffd766"/><path d="M4 19v-8h14v8h-3.500v-3.500h-7V19z" fill="#3389d4"/></svg></task-item>
<task-item open active style="width:48px;margin-left:1px"><svg width="22" height="22" viewBox="0 0 22 22"><circle cx="11" cy="11" r="11" fill="#fbc116"/><path d="M1.500 5.500a11 11 0 0 1 19 0L11 6.500l-4.500 8z" fill="#e33b2e"/><path d="M1.500 5.500A11 11 0 0 0 11 22l4.500-8.500L11 15z" fill="#1da462"/><path d="M11 0a11 11 0 0 1 9.500 6H11z" fill="#e33b2e"/><circle cx="11" cy="11" r="5.100" fill="#fff"/><circle cx="11" cy="11" r="4" fill="#4285f4"/></svg></task-item>
<task-item open style="width:48px;margin-left:1px"><svg width="24" height="24">${vs}<circle cx="18.500" cy="18" r="6" fill="#12b9a2"/><path d="M18.500 14v7M16 18.500l2.500 2.500 2.500-2.500" fill="none" stroke="#fff" stroke-width="1.300"/></svg></task-item>
<task-item open style="width:48px;margin-left:1px"><svg width="24" height="24">${vs}</svg></task-item>
<div class="tray"><svg width="13" height="8"><path d="M1 7l5.500-5.500L12 7" fill="none" stroke="#fff" stroke-width="1.300"/></svg>
<svg style="margin-left:18px" width="17" height="14"><path d="M3 10a3 3 0 0 1 0-6c1-4 8-4 9 0 3 0 3 6 0 6z" fill="#c7cbd1"/><circle cx="11.500" cy="9" r="4.600" fill="#dc2130"/><path d="M9.700 7.200l3.600 3.600m0-3.600l-3.600 3.600" stroke="#fff" stroke-width="1.200"/></svg>
<svg style="margin-left:16px" width="16" height="9"><path d="M.6.600h12.800v7.800H.6z" fill="none" stroke="#fff" stroke-width="1.200"/><path d="M2.500 2.500h5v4h-5zM14 3h1.500v3H14z" fill="#fff"/></svg>
<svg style="margin-left:15px" width="17" height="13"><path d="M.6 4.500h2.500L7 1v11L3.100 8.500H.6z" fill="none" stroke="#fff" stroke-width="1.100"/><path d="M9 4.500q1.500 2 0 4M11 3q3 3.500 0 7" fill="none" stroke="#fff"/><path d="M13.500 1.500q4 5 0 10" fill="none" stroke="#7d8598"/></svg>
<div class="two" style="margin-left:13px"><ui-text w="23">ENG</ui-text><ui-text w="12">IN</ui-text></div>
<div class="two" style="margin-left:13px"><ui-text w="49">10:33 AM</ui-text><ui-text w="52">10/7/2020</ui-text></div>
<div class="msg"><svg width="16" height="15"><path d="M0 0h16v12h-7l-3 3v-3H0z" fill="#fff"/><path d="M3 3.500h10M3 6h10M3 8.500h6" stroke="#1c2646"/></svg><div class="n" style="left:7px;top:7px">2</div></div><div class="end"></div></div>`);

define('meeting-desktop', `
:host{width:1366px;height:768px;display:flex;flex-direction:column;overflow:hidden}
.main{display:flex;height:625px}.web{width:1350px;display:flex;flex-direction:column}
.top{display:flex;height:581px;background:#f1f1f1}.side{width:350px;padding-top:1px;flex:none}`,
`<tab-strip></tab-strip><address-bar></address-bar><bookmarks-bar></bookmarks-bar>
<div class="main"><div class="web"><div class="top"><shared-screen></shared-screen><div class="side"><speaker-video></speaker-video><chat-panel></chat-panel></div></div><control-bar></control-bar></div><page-scrollbar></page-scrollbar></div>
<win-taskbar></win-taskbar>`);
</script>
</body>
</html>
